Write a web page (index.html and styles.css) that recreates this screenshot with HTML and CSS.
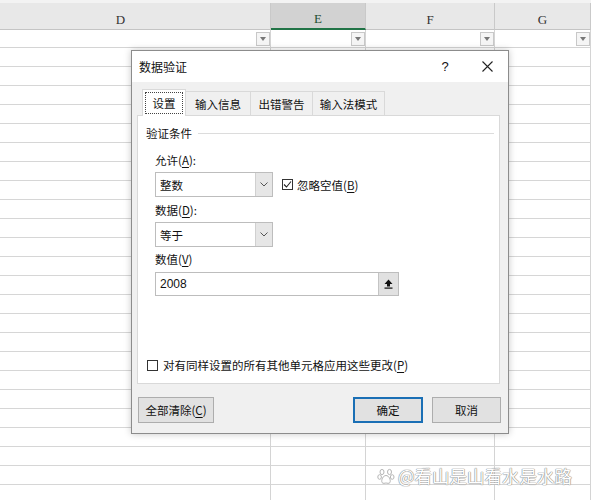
FILE: index.html
```html
<!DOCTYPE html>
<html lang="zh-CN">
<head>
  <meta charset="UTF-8" />
  <title>数据验证</title>
  <link rel="stylesheet" href="styles.css">
</head>
<body>

  <div class="sheet">
    <div class="head-strip"></div>
    <div class="col-heads">
      <div class="col col-d">D</div>
      <div class="col col-e active">E</div>
      <div class="col col-f">F</div>
      <div class="col col-g">G</div>
    </div>
    <div class="filters">
      <div class="col col-d"><span class="dd"></span></div>
      <div class="col col-e"><span class="dd"></span></div>
      <div class="col col-f"><span class="dd"></span></div>
      <div class="col col-g"><span class="dd"></span></div>
    </div>
    <div class="grid">
      <div class="col col-d"></div>
      <div class="col col-e"></div>
      <div class="col col-f"></div>
      <div class="col col-g"></div>
    </div>
  </div>

  <div class="dialog">
    <div class="titlebar">
      <span class="title">数据验证</span>
      <span class="help">?</span>
      <span class="close">
        <svg width="11" height="11" viewBox="0 0 11 11"><path d="M0.5 0.5 L10.5 10.5 M10.5 0.5 L0.5 10.5" stroke="#222" stroke-width="1.1" fill="none"/></svg>
      </span>
    </div>

    <div class="body">
      <div class="tabs">
        <div class="tab selected" style="width:44px"><span class="focus">设置</span></div>
        <div class="tab" style="width:66px">输入信息</div>
        <div class="tab" style="width:63px">出错警告</div>
        <div class="tab" style="width:73px">输入法模式</div>
      </div>

      <div class="panel">
        <div class="group">
          <span>验证条件</span>
          <span class="rule"></span>
        </div>

        <div class="field-label first">允许(<u>A</u>):</div>
        <div class="field-row">
          <div class="select">
            <span class="value">整数</span>
            <span class="arrow"><svg width="8" height="5" viewBox="0 0 8 5"><path d="M0.5 0.5 L4 4 L7.5 0.5" stroke="#555" fill="none"/></svg></span>
          </div>
          <label class="check">
            <span class="box"><svg width="9" height="9" viewBox="0 0 9 9"><path d="M1 4.5 L3.5 7 L8 1.5" stroke="#222" stroke-width="1.1" fill="none"/></svg></span>
            <span>忽略空值(<u>B</u>)</span>
          </label>
        </div>

        <div class="field-label">数据(<u>D</u>):</div>
        <div class="field-row">
          <div class="select">
            <span class="value">等于</span>
            <span class="arrow"><svg width="8" height="5" viewBox="0 0 8 5"><path d="M0.5 0.5 L4 4 L7.5 0.5" stroke="#555" fill="none"/></svg></span>
          </div>
        </div>

        <div class="field-label value-label">数值(<u>V</u>)</div>
        <div class="field-row">
          <div class="input">
            <span class="value">2008</span>
            <span class="pick"><svg width="9" height="10" viewBox="0 0 9 10"><path d="M4.5 0.5 L8.5 5 L6 5 L6 7.5 L3 7.5 L3 5 L0.5 5 Z" fill="#111"/><rect x="0.5" y="8.5" width="8" height="1.2" fill="#111"/></svg></span>
          </div>
        </div>

        <label class="check apply">
          <span class="box"></span>
          <span>对有同样设置的所有其他单元格应用这些更改(<u>P</u>)</span>
        </label>
      </div>

      <div class="buttons">
        <button class="btn clear">全部清除(<u>C</u>)</button>
        <span class="spacer"></span>
        <button class="btn ok">确定</button>
        <button class="btn cancel">取消</button>
      </div>
    </div>
  </div>

  <div class="watermark">
    <svg width="18" height="18" viewBox="0 0 18 18"><g fill="#fff" stroke="#b5b5b5" stroke-width="1"><ellipse cx="5" cy="5" rx="2" ry="2.6"/><ellipse cx="12.5" cy="5" rx="2" ry="2.6"/><ellipse cx="2.6" cy="10" rx="1.8" ry="2.3"/><ellipse cx="15.2" cy="10" rx="1.8" ry="2.3"/><path d="M9 8.5 C6 8.5 4 13 5 15.5 C6 17 8 16 9 16 C10 16 12 17 13 15.5 C14 13 12 8.5 9 8.5 Z"/></g></svg>
    <span>@看山是山看水是水路</span>
  </div>

</body>
</html>
```

FILE: styles.css
```css
body {
  margin: 0;
  background: #fff;
  font-family: "Noto Sans CJK SC", sans-serif;
  overflow: hidden;
  height: 500px;
  position: relative;
}

/* spreadsheet behind the dialog */
.sheet {
  display: flex;
  flex-direction: column;
  height: 500px;
}

.head-strip {
  height: 3px;
  background: #f3f3f3;
}

.col-heads,
.filters,
.grid {
  display: flex;
  margin-left: -29px;
}

.col {
  box-sizing: border-box;
  border-right: 1px solid #d4d4d4;
  flex-shrink: 0;
}
.col-d { width: 300px; }
.col-e { width: 95px; }
.col-f { width: 129px; }
.col-g { width: 96px; }

.col-heads .col {
  height: 27px;
  background: #e8e8e8;
  border-bottom: 1px solid #c4c4c4;
  border-right-color: #c9c9c9;
  font-family: "Liberation Serif", serif;
  font-size: 13px;
  color: #333;
  display: flex;
  align-items: center;
  justify-content: center;
  padding-top: 7px;
}
.col-heads .col.active {
  background: #d2d2d2;
  border-bottom: 2px solid #217346;
  color: #1f4f33;
}

.filters .col {
  height: 18px;
  border-bottom: 1px solid #d4d4d4;
  display: flex;
  justify-content: flex-end;
  align-items: center;
}

.dd {
  width: 14px;
  height: 14px;
  box-sizing: border-box;
  border: 1px solid #c8c8c8;
  background: #f5f5f5;
  display: flex;
  align-items: center;
  justify-content: center;
}
.dd::after {
  content: "";
  border-top: 4px solid #777;
  border-left: 3px solid transparent;
  border-right: 3px solid transparent;
}

.grid {
  flex: 1;
}
.grid .col {
  background: repeating-linear-gradient(to bottom, transparent 0, transparent 18px, #d6d6d6 18px, #d6d6d6 19px);
}

/* dialog */
.dialog {
  position: absolute;
  left: 131px;
  top: 50px;
  width: 378px;
  height: 384px;
  box-sizing: border-box;
  border: 1px solid #8c8c8c;
  background: #f0f0f0;
  box-shadow: 0 0 7px rgba(0, 0, 0, 0.22);
  display: flex;
  flex-direction: column;
  font-size: 11.5px;
  color: #111;
}

.titlebar {
  height: 31px;
  background: #fff;
  display: flex;
  align-items: center;
  padding-left: 7px;
}
.title {
  flex: 1;
  font-size: 12px;
}
.help,
.close {
  width: 42px;
  display: flex;
  justify-content: center;
  align-items: center;
}
.help {
  font-family: "Liberation Sans", sans-serif;
  font-size: 13px;
}

.body {
  flex: 1;
  display: flex;
  flex-direction: column;
  padding: 7px 8px 10px 5px;
}

.tabs {
  display: flex;
  align-items: flex-end;
  height: 26px;
  padding-left: 5px;
}
.tab {
  height: 24px;
  box-sizing: border-box;
  border: 1px solid #d9d9d9;
  border-bottom: none;
  margin-left: -1px;
  background: #f0f0f0;
  display: flex;
  align-items: center;
  justify-content: center;
  line-height: 16px;
}
.tab.selected {
  height: 27px;
  margin-left: 0;
  margin-bottom: -1px;
  background: #fff;
  position: relative;
  z-index: 1;
  padding: 2px;
}
.focus {
  flex: 1;
  align-self: stretch;
  display: flex;
  align-items: center;
  justify-content: center;
  border: 1px dotted #444;
}

.panel {
  height: 269px;
  box-sizing: border-box;
  border: 1px solid #d9d9d9;
  background: #fff;
  padding: 9px 5px 10px 8px;
  display: flex;
  flex-direction: column;
  line-height: 16px;
}

.group {
  display: flex;
  align-items: center;
  gap: 6px;
}
.rule {
  flex: 1;
  border-top: 1px solid #dcdcdc;
}

.field-label {
  margin-left: 9px;
  margin-top: 5px;
}
.field-label.first {
  margin-top: 11px;
}
.field-label.value-label {
  margin-top: 4px;
}

.field-row {
  display: flex;
  align-items: center;
  margin-left: 9px;
  margin-top: 4px;
}

.select {
  width: 118px;
  height: 25px;
  box-sizing: border-box;
  border: 1px solid #bdbdbd;
  display: flex;
}
.select .value,
.input .value {
  flex: 1;
  display: flex;
  align-items: center;
  padding-left: 4px;
}
.select .arrow {
  width: 16px;
  background: #e6e6e6;
  border-left: 1px solid #d0d0d0;
  display: flex;
  align-items: center;
  justify-content: center;
}

.input {
  width: 244px;
  height: 24px;
  box-sizing: border-box;
  border: 1px solid #bdbdbd;
  display: flex;
  margin-top: 1px;
}
.input .value {
  font-family: "Liberation Sans", sans-serif;
  font-size: 12px;
}
.input .pick {
  width: 19px;
  background: #e1e1e1;
  border-left: 1px solid #c4c4c4;
  display: flex;
  align-items: center;
  justify-content: center;
}

.check {
  display: flex;
  align-items: center;
  gap: 4px;
  margin-left: 9px;
}
.box {
  width: 11px;
  height: 11px;
  box-sizing: border-box;
  border: 1px solid #333;
  display: flex;
  align-items: center;
  justify-content: center;
}
.check.apply {
  margin-top: auto;
  margin-left: 1px;
  gap: 5px;
}

.buttons {
  display: flex;
  margin-top: 13px;
  height: 26px;
}
.spacer {
  flex: 1;
}
.btn {
  height: 26px;
  box-sizing: border-box;
  border: 1px solid #adadad;
  background: #e1e1e1;
  font-family: "Noto Sans CJK SC", sans-serif;
  font-size: 11.5px;
  color: #111;
  padding: 0;
}
.btn.clear {
  width: 76px;
  margin-left: 1px;
}
.btn.ok {
  width: 70px;
  border: 2px solid #1a6fb5;
}
.btn.cancel {
  width: 69px;
  margin-left: 9px;
  margin-right: -1px;
}

u {
  text-decoration-thickness: 1px;
  text-underline-offset: 2px;
}

.watermark {
  position: absolute;
  left: 377px;
  top: 465px;
  display: flex;
  align-items: center;
  gap: 3px;
  font-size: 17.5px;
  color: #fff;
  text-shadow: 0 0 1px #8a8a8a, 0 0 1px #8a8a8a, 0 0 1px #8a8a8a;
  line-height: 22px;
}
```
